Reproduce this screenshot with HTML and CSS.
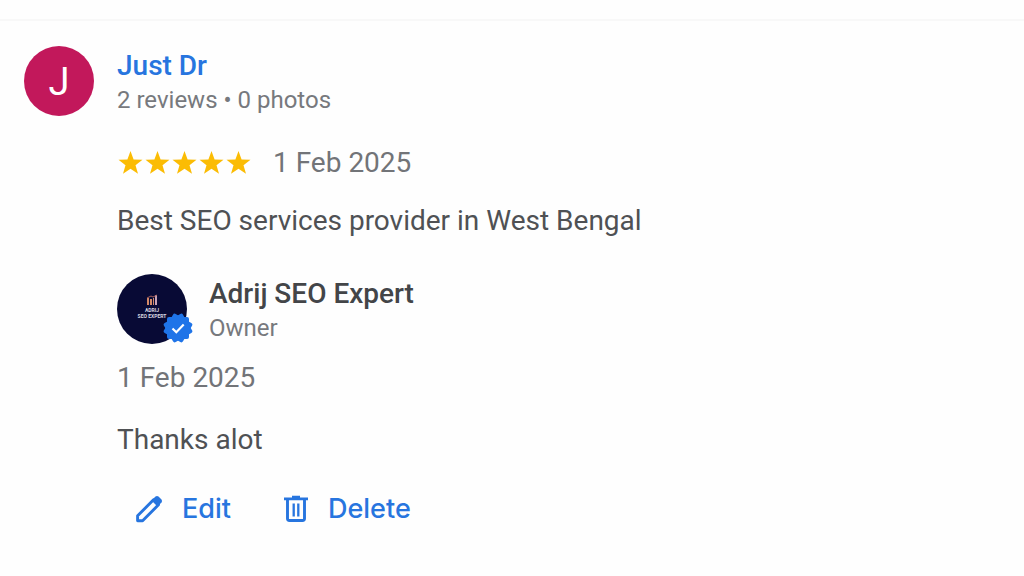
FILE: index.html
```
<!DOCTYPE html>
<html lang="en">

<head>
  <meta charset="utf-8">
  <meta name="viewport" content="width=device-width, initial-scale=1">
  <title>Reviews</title>
  <link rel="stylesheet" href="styles.css">
</head>

<body>
  <main class="review-list">
    <article class="review">
      <div class="avatar">J</div>

      <div class="review-content">
        <header class="person">
          <a class="name" href="#">Just Dr</a>
          <span class="meta">2 reviews • 0 photos</span>
        </header>

        <div class="rating-row">
          <svg class="stars" viewBox="0 0 134 24" role="img" aria-label="5 out of 5 stars">
            <defs>
              <path id="star" d="M13.500 0l3.100 8.400 8.900.3-7 5.500 2.500 8.600-7.500-5-7.500 5 2.500-8.600-7-5.500 8.900-.3z" />
            </defs>
            <use href="#star" />
            <use href="#star" x="27" />
            <use href="#star" x="54" />
            <use href="#star" x="81" />
            <use href="#star" x="108" />
          </svg>
          <time class="date" datetime="2025-02-01">1 Feb 2025</time>
        </div>

        <p class="text">Best SEO services provider in West Bengal</p>

        <section class="reply">
          <div class="owner">
            <div class="owner-avatar">
              <svg class="owner-logo" viewBox="0 0 70 70" aria-hidden="true">
                <circle cx="35" cy="35" r="35" fill="#080a35" />
                <path d="M30 31v-7h2v7zM33 31v-6h2v6zM36 31v-7h1v7z" fill="#d38a68" />
                <path d="M38 31V21h2v10z" fill="#c9a3b5" />
                <path d="M30 24l4-2 2 1 4-2" fill="none" stroke="#a5605c" />
                <text x="35" y="38" class="logo-text">ADRIJ</text>
                <text x="35" y="44" class="logo-text">SEO EXPERT</text>
              </svg>
              <svg class="badge" viewBox="0 0 30 30" role="img" aria-label="Verified">
                <g fill="#1f74e8">
                  <rect x="4" y="4" width="22" height="22" rx="2" />
                  <rect x="4" y="4" width="22" height="22" rx="2" transform="rotate(30 15 15)" />
                  <rect x="4" y="4" width="22" height="22" rx="2" transform="rotate(60 15 15)" />
                </g>
                <path d="M9.500 15.500l3.800 3.700 7.400-7.600" fill="none" stroke="#fff" stroke-width="2.200" />
              </svg>
            </div>
            <div class="person">
              <span class="name owner-name">Adrij SEO Expert</span>
              <span class="meta">Owner</span>
            </div>
          </div>

          <time class="date reply-date" datetime="2025-02-01">1 Feb 2025</time>
          <p class="text">Thanks alot</p>

          <div class="actions">
            <button class="action" type="button">
              <svg class="icon" viewBox="0 0 28 28" aria-hidden="true">
                <path d="M2.600 25.800v-5L18.500 4.800l5 5L7.600 25.800z" fill="none" stroke="currentColor" stroke-width="2.900" stroke-linejoin="round" />
                <path d="M16.500 5.500l4-4q1.500-1.200 3 0l3 3q1.200 1.500 0 3l-4 4z" fill="currentColor" />
              </svg>
              Edit
            </button>
            <button class="action" type="button">
              <svg class="icon" viewBox="0 0 28 28" aria-hidden="true">
                <path d="M3 3.800h24M11 2.200h8" fill="none" stroke="currentColor" stroke-width="2.800" />
                <path d="M6.500 4v19.500q0 2 2 2h13q2 0 2-2V4" fill="none" stroke="currentColor" stroke-width="2.900" />
                <path d="M12.700 8.500v13M17.300 8.500v13" fill="none" stroke="currentColor" stroke-width="2.300" />
              </svg>
              Delete
            </button>
          </div>
        </section>
      </div>
    </article>
  </main>
</body>

</html>
```
FILE: styles.css
```
body {
  margin: 0;
  background-color: #fefefe;
  font-family: Roboto, Arial, sans-serif;
  color: #4f5154;
}

.review-list {
  padding-top: 19px;
}

.review {
  display: flex;
  gap: 23px;
  padding: 25px 24px;
  border-top: 2px solid #f8f8f8;
}

.avatar {
  flex: none;
  width: 70px;
  height: 70px;
  border-radius: 50%;
  background-color: #c2185b;
  color: #fff;
  font-size: 38px;
  line-height: 72px;
  text-align: center;
}

.review-content {
  flex: 1;
  min-width: 0;
}

.person {
  display: flex;
  flex-direction: column;
  align-items: flex-start;
}

.name {
  font-size: 28px;
  font-weight: 500;
  line-height: 40px;
  color: #2775df;
  text-decoration: none;
}

.owner-name {
  color: #434548;
}

.meta {
  font-size: 24px;
  line-height: 28px;
  color: #77797d;
}

.rating-row {
  display: flex;
  align-items: center;
  gap: 22px;
  margin-top: 32px;
}

.stars {
  width: 134px;
  height: 24px;
  fill: #fbbc04;
}

.date {
  font-size: 28px;
  line-height: 34px;
  color: #727478;
}

.text {
  margin: 24px 0 0;
  font-size: 28px;
  line-height: 34px;
}

.reply {
  margin-top: 36px;
}

.owner {
  display: flex;
  gap: 22px;
}

.owner-avatar {
  position: relative;
  flex: none;
  width: 70px;
  height: 70px;
}

.owner-logo {
  display: block;
  width: 100%;
}

.logo-text {
  font-size: 5px;
  font-weight: 700;
  text-anchor: middle;
  fill: #d8d8e0;
}

.badge {
  position: absolute;
  right: -6px;
  bottom: 1px;
  width: 30px;
  height: 30px;
}

.reply-date {
  display: block;
  margin-top: 17px;
}

.reply .text {
  margin-top: 28px;
}

.actions {
  display: flex;
  gap: 50px;
  margin: 32px 18px 0;
}

.action {
  display: flex;
  align-items: center;
  gap: 19px;
  padding: 0;
  border: 0;
  background: none;
  color: #2775df;
  font-family: Inter, Roboto, sans-serif;
  font-size: 27px;
  font-weight: 500;
  line-height: 40px;
  cursor: pointer;
}

.icon {
  width: 28px;
  height: 28px;
}
```
